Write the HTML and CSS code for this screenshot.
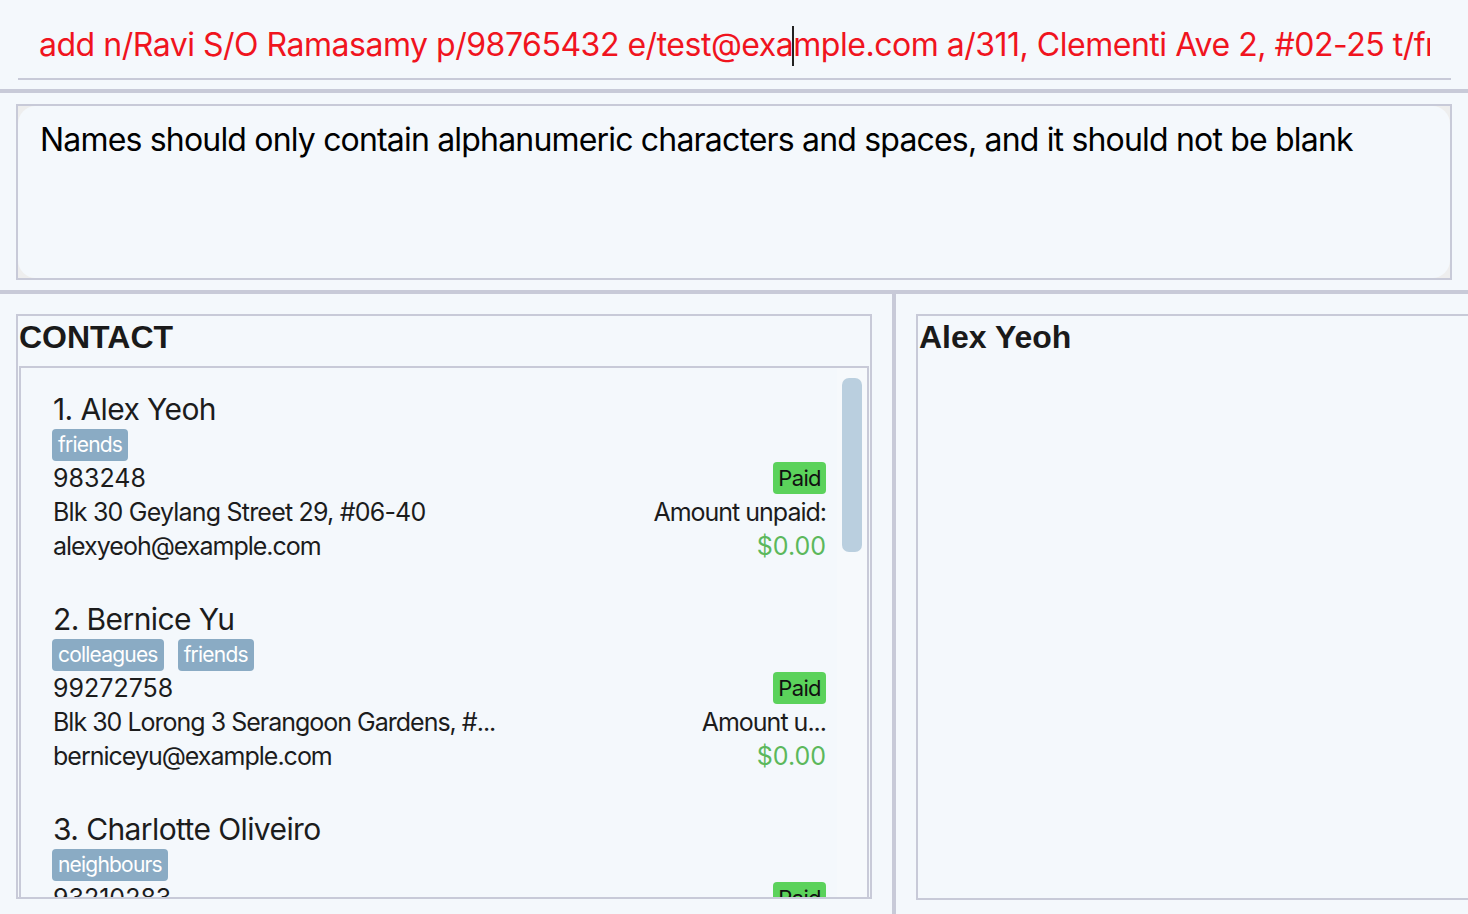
FILE: index.html
```html
<!DOCTYPE html>
<html lang="en">
<head>
<meta charset="utf-8">
<title>Address Book</title>
<link rel="stylesheet" href="styles.css">
</head>
<body>
<div class="app">
  <div class="command-bar">
    <div class="command-input">
      <div class="cmd-field">add n/Ravi S/O Ramasamy p/98765432 e/test@exa<span class="caret"></span>mple.com a/311, Clementi Ave 2, #02-25 t/friends t/colleagues</div>
    </div>
  </div>
  <div class="separator"></div>
  <div class="result-area">
    <div class="result-box">
      <div class="result-text">Names should only contain alphanumeric characters and spaces, and it should not be blank</div>
    </div>
  </div>
  <div class="separator"></div>
  <div class="main">
    <div class="left">
      <div class="panel contact-panel">
        <div class="panel-title">CONTACT</div>
        <div class="list">
          <div class="cards">
            <div class="card">
              <div class="card-left">
                <div class="name">1. Alex Yeoh</div>
                <div class="tags"><span class="tag">friends</span></div>
                <div class="line phone">983248</div>
                <div class="line addr">Blk 30 Geylang Street 29, #06-40</div>
                <div class="line">alexyeoh@example.com</div>
              </div>
              <div class="card-right">
                <span class="paid">Paid</span>
                <div class="line">Amount unpaid:</div>
                <div class="line money">$0.00</div>
              </div>
            </div>
            <div class="card">
              <div class="card-left">
                <div class="name">2. Bernice Yu</div>
                <div class="tags"><span class="tag">colleagues</span><span class="tag">friends</span></div>
                <div class="line phone">99272758</div>
                <div class="line">Blk 30 Lorong 3 Serangoon Gardens, #...</div>
                <div class="line">berniceyu@example.com</div>
              </div>
              <div class="card-right">
                <span class="paid">Paid</span>
                <div class="line">Amount u...</div>
                <div class="line money">$0.00</div>
              </div>
            </div>
            <div class="card">
              <div class="card-left">
                <div class="name">3. Charlotte Oliveiro</div>
                <div class="tags"><span class="tag">neighbours</span></div>
                <div class="line phone">93210283</div>
                <div class="line">Blk 11 Ang Mo Kio Street 74, #11-04</div>
                <div class="line">charlotte@example.com</div>
              </div>
              <div class="card-right">
                <span class="paid">Paid</span>
                <div class="line">Amount unpaid:</div>
                <div class="line money">$0.00</div>
              </div>
            </div>
          </div>
          <div class="scroll-track"><div class="scroll-thumb"></div></div>
        </div>
      </div>
    </div>
    <div class="divider"></div>
    <div class="right">
      <div class="panel detail-panel">
        <div class="panel-title">Alex Yeoh</div>
      </div>
    </div>
  </div>
</div>
</body>
</html>
```
FILE: styles.css
```css
* { box-sizing: border-box; }
html, body { margin: 0; padding: 0; }
body {
  background: #f4f8fc;
  font-family: Inter, "Noto Sans", sans-serif;
  color: #1c1c1c;
  width: 1468px;
  height: 914px;
  overflow: hidden;
}
.app { display: flex; flex-direction: column; height: 914px; }

.command-bar { height: 89px; padding: 0 17px 0 18px; }
.command-input {
  height: 80px;
  border-bottom: 2px solid #c8cad8;
  padding: 25px 21px 0 21px;
}
.cmd-field {
  font-size: 32px;
  line-height: 40px;
  letter-spacing: -0.48px;
  color: #f0141e;
  white-space: nowrap;
  overflow: hidden;
}
.caret {
  display: inline-block;
  width: 2px;
  height: 40px;
  background: #222;
  vertical-align: -10px;
  margin: 0 -1px;
}
.separator { height: 4px; background: #c8cad8; flex: none; }

.result-area { height: 197px; padding: 11px 16px 0 16px; }
.result-box {
  width: 1436px;
  height: 176px;
  border: 2px solid #c8cad8;
  background: #eeeeee;
}
.result-text {
  height: 100%;
  border-radius: 18px;
  background: #f4f8fc;
  padding: 14px 22px;
  font-size: 32px;
  line-height: 40px;
  letter-spacing: -0.82px;
  color: #000;
}

.main { flex: 1; display: flex; min-height: 0; }
.left { width: 892px; padding: 20px 20px 15px 16px; flex: none; }
.divider { width: 4px; background: #c8cad8; flex: none; }
.right { flex: 1; padding: 20px 0 14px 20px; min-width: 0; }

.panel { border: 2px solid #c8cad8; height: 100%; display: flex; flex-direction: column; }
.detail-panel { border-right: none; }
.panel-title {
  font-family: "Liberation Sans", Arial, sans-serif;
  font-weight: bold;
  font-size: 32px;
  height: 50px;
  line-height: 42px;
  padding-left: 1px;
  color: #1a1a1a;
  flex: none;
}
.list {
  flex: 1;
  min-height: 0;
  margin: 0 1px 0 1px;
  border: 2px solid #c8cad8;
  border-bottom: none;
  display: flex;
  overflow: hidden;
}
.cards { flex: 1; min-width: 0; padding: 0 11px 0 32px; }
.card { height: 210px; display: flex; justify-content: space-between; align-items: flex-end; padding-bottom: 15px; }
.card-left { display: flex; flex-direction: column; align-items: flex-start; }
.name { font-size: 30px; line-height: 40px; letter-spacing: -0.6px; color: #1c1c1c; }
.tags { display: flex; gap: 14px; height: 32px; margin-left: -1px; }
.tag {
  background: #8aabc4;
  color: #fff;
  font-size: 21px;
  line-height: 32px;
  letter-spacing: -0.8px;
  padding: 0 6px;
  border-radius: 4px;
}
.line { font-size: 25px; line-height: 34px; letter-spacing: -1px; white-space: nowrap; }
.addr { letter-spacing: -0.8px; }
.phone { letter-spacing: 0; }
.card-right { display: flex; flex-direction: column; align-items: flex-end; }
.paid {
  background: #5bd25b;
  color: #111;
  font-size: 22px;
  line-height: 32px;
  letter-spacing: -0.6px;
  padding: 0 5px;
  border-radius: 4px;
  margin-bottom: 1px;
  margin-top: -2px;
}
.money { color: #5cb85c; letter-spacing: 0; }
.scroll-track { width: 30px; flex: none; padding: 10px 5px 0 5px; background: #f6f9fc; }
.scroll-thumb { width: 20px; height: 174px; background: #bacfdf; border-radius: 7px; }
```
